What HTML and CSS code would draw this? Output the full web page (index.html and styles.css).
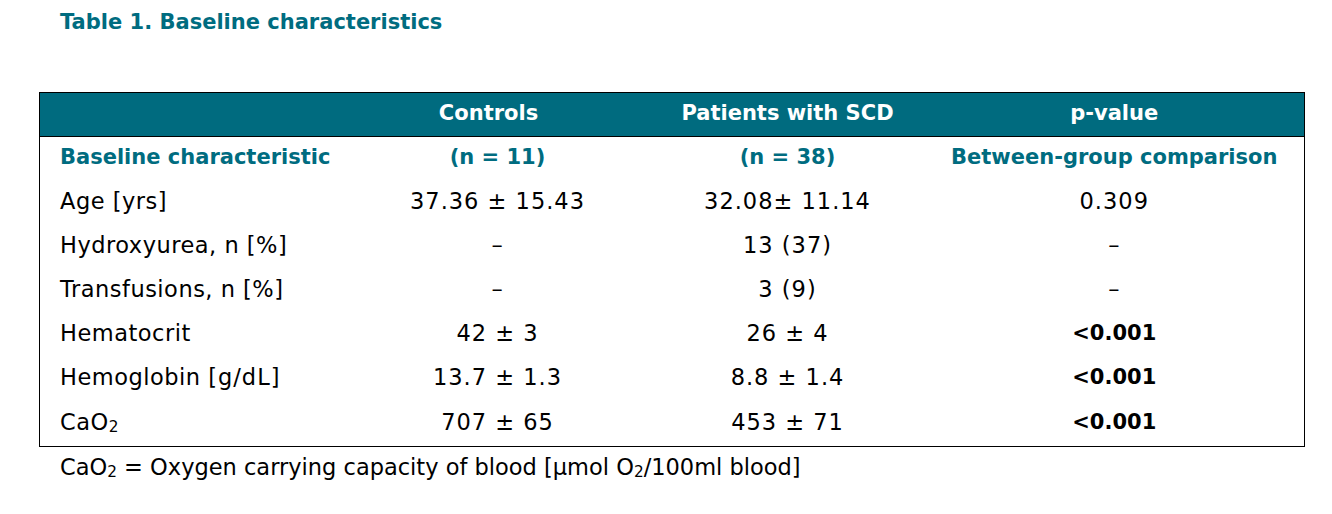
FILE: index.html
```html
<!DOCTYPE html>
<html lang="en">
<head>
<meta charset="utf-8">
<title>Table 1. Baseline characteristics</title>
<link rel="stylesheet" href="styles.css">
</head>
<body>
<div class="page">
  <h1 class="title">Table 1. Baseline characteristics</h1>
  <table class="data">
    <colgroup>
      <col class="c1"><col class="c2"><col class="c3"><col class="c4">
    </colgroup>
    <thead>
      <tr class="head">
        <th></th>
        <th>Controls</th>
        <th>Patients with SCD</th>
        <th>p-value</th>
      </tr>
    </thead>
    <tbody>
      <tr class="sub">
        <td class="label">Baseline characteristic</td>
        <td class="ctrl">(n = 11)</td>
        <td>(n = 38)</td>
        <td>Between-group comparison</td>
      </tr>
      <tr>
        <td class="label">Age [yrs]</td>
        <td class="num ctrl">37.36 ± 15.43</td>
        <td class="num">32.08± 11.14</td>
        <td class="num">0.309</td>
      </tr>
      <tr>
        <td class="label">Hydroxyurea, n [%]</td>
        <td class="num ctrl">–</td>
        <td class="num">13 (37)</td>
        <td class="num">–</td>
      </tr>
      <tr>
        <td class="label">Transfusions, n [%]</td>
        <td class="num ctrl">–</td>
        <td class="num">3 (9)</td>
        <td class="num">–</td>
      </tr>
      <tr>
        <td class="label">Hematocrit</td>
        <td class="num ctrl">42 ± 3</td>
        <td class="num">26 ± 4</td>
        <td class="sig">&lt;0.001</td>
      </tr>
      <tr>
        <td class="label">Hemoglobin <span class="unit">[g/dL]</span></td>
        <td class="num ctrl">13.7 ± 1.3</td>
        <td class="num">8.8 ± 1.4</td>
        <td class="sig">&lt;0.001</td>
      </tr>
      <tr class="last">
        <td class="label">CaO<sub>2</sub></td>
        <td class="num ctrl">707 ± 65</td>
        <td class="num">453 ± 71</td>
        <td class="sig">&lt;0.001</td>
      </tr>
    </tbody>
  </table>
  <p class="note">CaO<sub>2</sub> = Oxygen carrying capacity of blood [µmol O<sub>2</sub>/100ml blood]</p>
</div>
</body>
</html>
```

FILE: styles.css
```css
html, body {
  margin: 0;
  padding: 0;
  background: #ffffff;
}

body {
  font-family: "DejaVu Sans", "Liberation Sans", sans-serif;
  color: #000;
}

.page {
  padding: 8px 0 0 39px;
  width: 1266px;
}

.title {
  margin: 0 0 0 21px;
  font-size: 21px;
  font-weight: bold;
  line-height: 28px;
  color: #006c80;
}

.data {
  margin-top: 56px;
  width: 1266px;
  border-collapse: collapse;
  table-layout: fixed;
  border: 1px solid #000;
  font-size: 22.5px;
}

.c1 { width: 287px; }
.c2 { width: 324px; }
.c3 { width: 274px; }
.c4 { width: 380px; }

.data th,
.data td {
  padding: 0 0 3px 0;
  text-align: center;
  white-space: nowrap;
}

.head th {
  height: 40px;
  padding-bottom: 3px;
  background: #006b7f;
  color: #ffffff;
  font-size: 21px;
  font-weight: bold;
  border-bottom: 1px solid #000;
}

.data tbody tr {
  height: 44px;
}

.data tbody tr.last {
  height: 46px;
}

.data td.label {
  text-align: left;
  padding-left: 20px;
  letter-spacing: 0.5px;
}

.data td.num {
  letter-spacing: 1px;
}

.data td.ctrl {
  padding-left: 18px;
}

.sub td,
.data .sub td.label {
  color: #006c80;
  font-size: 21px;
  font-weight: bold;
  letter-spacing: 0;
}

.data td.sig {
  font-size: 21px;
  font-weight: bold;
}

.unit {
  letter-spacing: 1px;
}

sub {
  font-size: 0.68em;
  vertical-align: -0.12em;
  line-height: 0;
}

.note {
  margin: 6px 0 0 21px;
  font-size: 22.5px;
  line-height: 28px;
}
```
